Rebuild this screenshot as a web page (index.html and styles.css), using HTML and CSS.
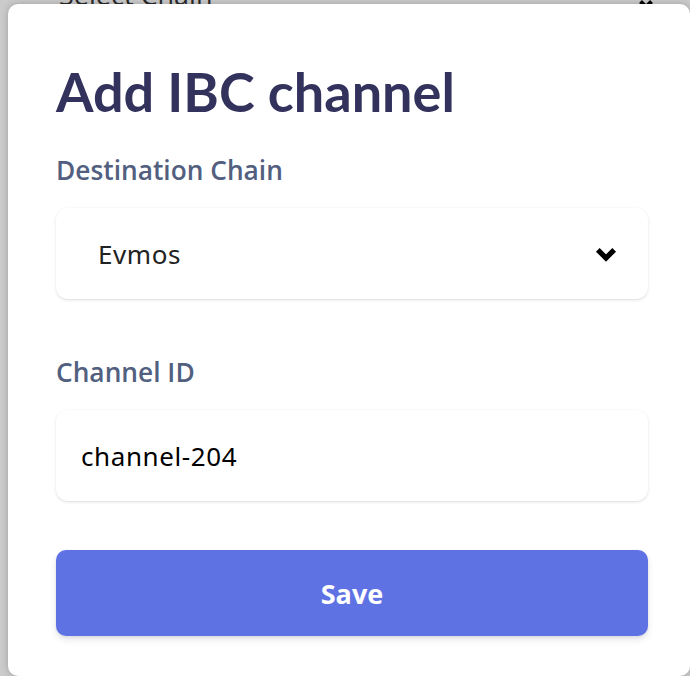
FILE: index.html
```html
<!DOCTYPE html>
<html lang="en">
<head>
<meta charset="utf-8">
<title>Add IBC channel</title>
<link rel="stylesheet" href="styles.css">
</head>
<body>
  <div class="page">
    <div class="page-row">
      <span class="page-select">Select Chain</span>
      <svg class="page-chev" width="16" height="10" viewBox="0 0 16 10"><polyline points="2.5,2.5 8,8 13.5,2.5" fill="none" stroke="#000" stroke-width="4"/></svg>
    </div>
  </div>
  <div class="modal">
    <h1 class="title">Add IBC channel</h1>
    <div class="field">
      <label class="label">Destination Chain</label>
      <div class="select">
        <span class="select-value">Evmos</span>
        <svg class="chev" width="24" height="16" viewBox="0 0 24 16"><polyline points="3.8,3.8 12,12 20.2,3.8" fill="none" stroke="#000" stroke-width="5.2"/></svg>
      </div>
    </div>
    <div class="field field-second">
      <label class="label">Channel ID</label>
      <div class="input">channel-204</div>
    </div>
    <button class="btn">Save</button>
  </div>
</body>
</html>
```

FILE: styles.css
```css
html, body {
  margin: 0;
  height: 100%;
}

body {
  background: #cbcbcb;
  overflow: hidden;
  font-family: "Open Sans", "Noto Sans", sans-serif;
}

.page-row {
  height: 5px;
  display: flex;
  align-items: flex-end;
  padding: 0 36px 0 59px;
  justify-content: space-between;
}

.page-select {
  font-size: 27px;
  line-height: 1;
  margin-bottom: -3px;
  color: #2a2a2a;
}

.page-chev {
  margin-bottom: -4px;
}

.modal {
  position: absolute;
  top: 4px;
  left: 8px;
  right: 0;
  bottom: 0;
  background: #fff;
  border-radius: 10px;
  padding: 56px 42px 0 48px;
  box-shadow: 0 0 7px rgba(0, 0, 0, 0.22);
  display: flex;
  flex-direction: column;
}

.title {
  margin: 0 0 30px;
  font-family: Lato, "Open Sans", sans-serif;
  font-weight: 700;
  font-size: 54px;
  line-height: 64px;
  color: #32325d;
}

.field {
  display: flex;
  flex-direction: column;
}

.field-second {
  margin-top: 57px;
}

.label {
  font-family: "Open Sans", sans-serif;
  font-weight: 600;
  font-size: 26.3px;
  line-height: 32px;
  color: #525f7f;
  margin-bottom: 22px;
}

.select,
.input {
  height: 91px;
  box-sizing: border-box;
  border-radius: 12px;
  background: #fff;
  box-shadow: 0 1px 3px rgba(50, 50, 93, 0.15), 0 1px 0 rgba(0, 0, 0, 0.02);
  display: flex;
  align-items: center;
  font-family: "Noto Sans", sans-serif;
  font-size: 26px;
  letter-spacing: 0.6px;
}

.select {
  justify-content: space-between;
  padding: 0 30px 0 42px;
  color: #222;
}

.chev {
  display: block;
}

.input {
  padding-left: 25px;
  color: #000;
}

.btn {
  margin-top: 49px;
  height: 86px;
  width: 100%;
  border: none;
  border-radius: 10px;
  background: #5e72e4;
  color: #fff;
  font-family: "Open Sans", sans-serif;
  font-weight: 700;
  font-size: 27px;
  box-shadow: 0 4px 6px rgba(50, 50, 93, 0.11), 0 1px 3px rgba(0, 0, 0, 0.08);
  padding: 0;
}
```
